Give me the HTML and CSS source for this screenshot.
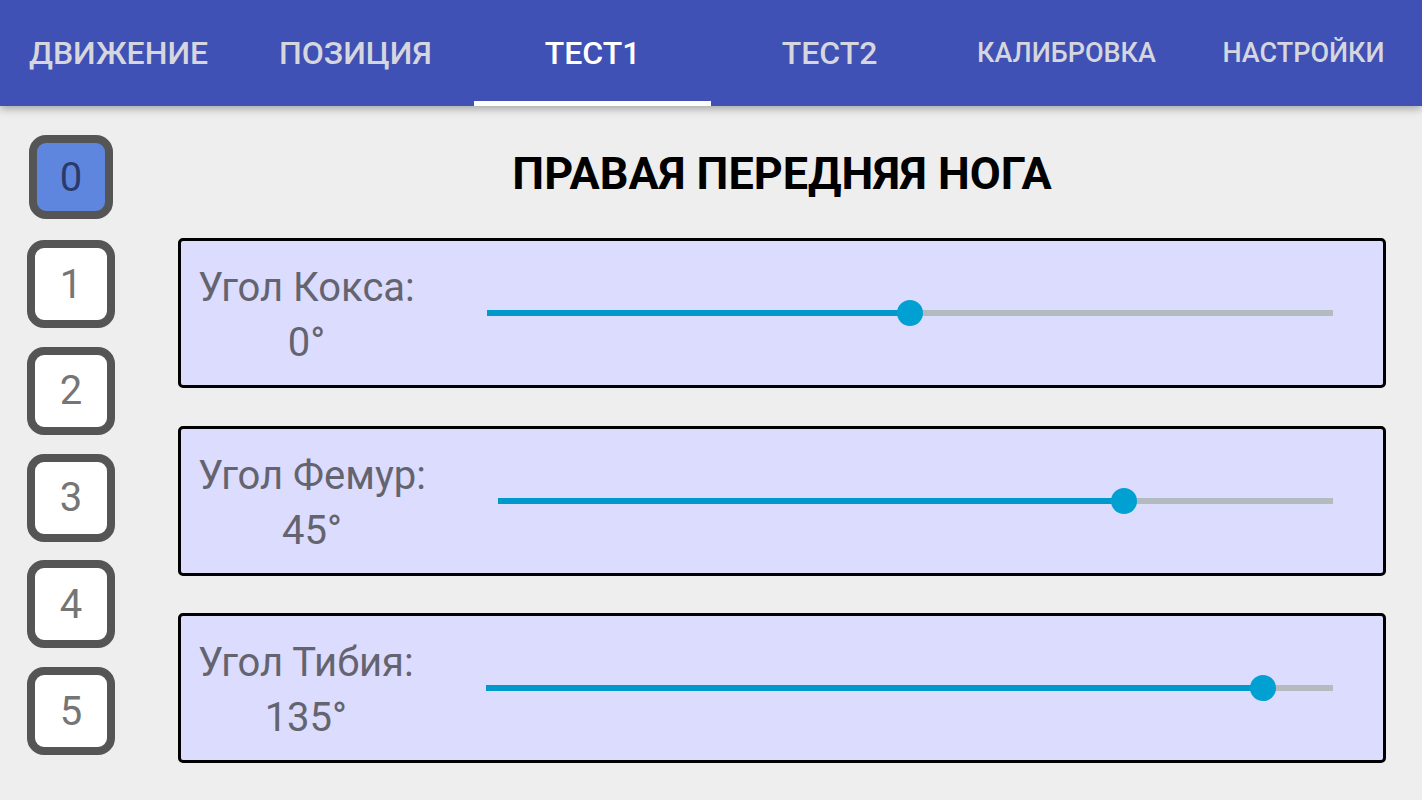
FILE: index.html
```html
<!DOCTYPE html>
<html lang="ru">
<head>
<meta charset="utf-8">
<title>Тест</title>
<link rel="stylesheet" href="styles.css">
</head>
<body>
<header class="tabs">
  <div class="tab"><span class="tab-text">ДВИЖЕНИЕ</span></div>
  <div class="tab"><span class="tab-text">ПОЗИЦИЯ</span></div>
  <div class="tab active"><span class="tab-text">ТЕСТ1</span></div>
  <div class="tab"><span class="tab-text">ТЕСТ2</span></div>
  <div class="tab small"><span class="tab-text">КАЛИБРОВКА</span></div>
  <div class="tab small"><span class="tab-text">НАСТРОЙКИ</span></div>
</header>
<main class="content">
  <nav class="legs">
    <div class="leg-cell"><div class="leg selected">0</div></div>
    <div class="leg-cell"><div class="leg">1</div></div>
    <div class="leg-cell"><div class="leg">2</div></div>
    <div class="leg-cell"><div class="leg">3</div></div>
    <div class="leg-cell"><div class="leg">4</div></div>
    <div class="leg-cell"><div class="leg">5</div></div>
  </nav>
  <section class="panel">
    <h1 class="title">ПРАВАЯ ПЕРЕДНЯЯ НОГА</h1>
    <div class="cards">
      <div class="card">
        <div class="label">Угол Кокса:<br>0°</div>
        <div class="slider">
          <div class="track"></div>
          <div class="fill" style="width:50%"></div>
          <div class="thumb" style="left:50%"></div>
        </div>
      </div>
      <div class="card">
        <div class="label">Угол Фемур:<br>45°</div>
        <div class="slider">
          <div class="track"></div>
          <div class="fill" style="width:75%"></div>
          <div class="thumb" style="left:75%"></div>
        </div>
      </div>
      <div class="card">
        <div class="label">Угол Тибия:<br>135°</div>
        <div class="slider">
          <div class="track"></div>
          <div class="fill" style="width:91.7%"></div>
          <div class="thumb" style="left:91.7%"></div>
        </div>
      </div>
    </div>
  </section>
</main>
</body>
</html>
```

FILE: styles.css
```css
* { box-sizing: border-box; }
html, body {
  margin: 0;
  padding: 0;
  width: 1422px;
  height: 800px;
  overflow: hidden;
  background: #eeeeee;
  font-family: Roboto, "Noto Sans", "Liberation Sans", sans-serif;
}
.tabs {
  height: 106px;
  background: #3f51b5;
  display: flex;
  position: relative;
  z-index: 2;
  box-shadow: 0 3px 8px rgba(0, 0, 0, 0.3);
}
.tab {
  flex: 1;
  display: flex;
  align-items: center;
  justify-content: center;
  font-weight: 500;
  font-size: 32px;
  color: #d6d6de;
  position: relative;
}
.tab.small { font-size: 27px; }
.tab.active { color: #ffffff; }
.tab.active::after {
  content: "";
  position: absolute;
  left: 0;
  right: 0;
  bottom: 0;
  height: 5px;
  background: #ffffff;
}
.content {
  display: flex;
  padding-top: 18px;
  padding-left: 27px;
}
.legs {
  width: 88px;
  display: flex;
  flex-direction: column;
}
.leg-cell {
  height: 106.75px;
  display: flex;
  align-items: center;
  justify-content: center;
}
.leg {
  width: 88px;
  height: 88px;
  border: 8px solid #555555;
  border-radius: 17px;
  background: #ffffff;
  color: #757575;
  font-size: 40px;
  display: flex;
  align-items: center;
  justify-content: center;
}
.leg.selected {
  width: 84px;
  height: 84px;
  background: #5f86df;
  color: #2a3a6c;
}
.panel {
  margin-left: 63px;
  width: 1208px;
  display: flex;
  flex-direction: column;
}
.title {
  margin: 0;
  height: 114px;
  display: flex;
  align-items: center;
  justify-content: center;
  font-size: 45px;
  font-weight: 700;
  color: #000000;
  padding-bottom: 16px;
}
.cards {
  display: flex;
  flex-direction: column;
  gap: 37.5px;
}
.card {
  height: 150px;
  border: 3px solid #000000;
  border-radius: 5px;
  background: #dcdcfe;
  display: flex;
  align-items: center;
  padding-left: 17px;
  padding-right: 50px;
}
.label {
  font-size: 40px;
  line-height: 55px;
  color: #646470;
  text-align: center;
  padding-top: 4px;
}
.slider {
  flex: 1;
  margin-left: 72px;
  height: 26px;
  position: relative;
}
.track, .fill {
  position: absolute;
  left: 0;
  top: 10px;
  height: 6px;
}
.track {
  right: 0;
  background: #b4bbbe;
}
.fill { background: #0099cc; }
.thumb {
  position: absolute;
  top: 0;
  width: 26px;
  height: 26px;
  margin-left: -13px;
  border-radius: 50%;
  background: #00a1d2;
}
```
